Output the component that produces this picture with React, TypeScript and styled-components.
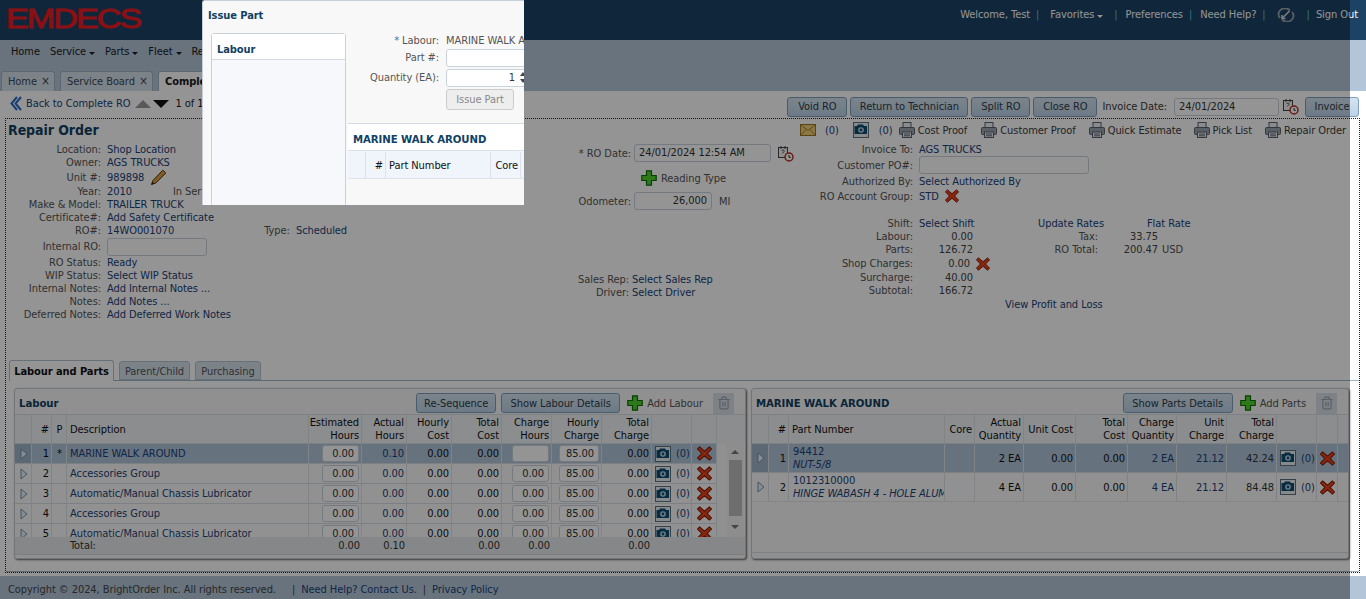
import React from 'react';
import styled, { createGlobalStyle } from 'styled-components';
import { Trash2 } from 'lucide-react';

const GlobalStyle = createGlobalStyle`
  html, body {
    margin: 0;
    height: 599px;
    overflow: hidden;
    background: #fff;
    font-family: "DejaVu Sans Condensed", "Liberation Sans", sans-serif;
    font-size: 11px;
    letter-spacing: -0.07px;
    color: #3b3b3b;
  }
  * { box-sizing: border-box; }
  svg { flex: none; }
`;

const LINK = '#1a4279';

// icons
const RedX = ({ size = 15 }: { size?: number }) => (
  <svg width={size} height={size} viewBox="0 0 16 16">
    <path d="M2.800 1 8 5.400 13.200 1 15.500 3.200 10.900 8 15.500 12.800 13.200 15 8 10.600 2.800 15 .5 12.800 5.100 8 .5 3.200z" fill="#e8431a" stroke="#7e1a08" strokeWidth="1.100" />
  </svg>
);

const GreenPlus = () => (
  <svg width="16" height="16" viewBox="0 0 16 16">
    <path d="M5.500 .8h5v4.700h4.700v5h-4.700v4.700h-5v-4.700H.8v-5h4.700z" fill="#52d32a" stroke="#0f6b10" strokeWidth="1.200" />
  </svg>
);

const Camera = () => (
  <svg width="16" height="16" viewBox="0 0 16 16">
    <rect x=".5" y=".5" width="15" height="15" fill="#e8eef3" stroke="#5d7080" />
    <path d="M1.500 4h2.500l1-1.500h5l1 1.500h3v8h-12.500z" fill="#0f4f73" />
    <circle cx="8" cy="8" r="2.800" fill="#c8dce8" />
    <circle cx="8" cy="8" r="1.400" fill="#0f4f73" />
  </svg>
);

const Printer = () => (
  <svg width="16" height="16" viewBox="0 0 16 16">
    <rect x="4" y=".5" width="8" height="6" fill="#eef1f4" stroke="#56636e" />
    <rect x=".5" y="5.500" width="15" height="7" rx="1" fill="#9aa7b2" stroke="#56636e" />
    <rect x="3.500" y="10" width="9" height="5.500" fill="#eef1f4" stroke="#56636e" />
    <path d="M5 12h6M5 13.800h6" stroke="#56636e" />
  </svg>
);

const Mail = () => (
  <svg width="16" height="14" viewBox="0 0 16 14">
    <rect x=".5" y="1.500" width="15" height="11" fill="#f1cf78" stroke="#9a7626" />
    <path d="M1 2l7 5.500L15 2M1 12l5-5.500M15 12l-5-5.500" fill="none" stroke="#a8822e" />
  </svg>
);

const CalendarClock = () => (
  <svg width="17" height="17" viewBox="0 0 17 17">
    <rect x="1.500" y="2.500" width="9" height="10" fill="#f4f4f4" stroke="#444" />
    <path d="M4 1v3M8 1v3" stroke="#444" />
    <path d="M4.500 6c1-1.500 3-1 2.600.4-.2.7-1.300 1-1.500 2" fill="none" stroke="#444" />
    <circle cx="12" cy="12" r="4" fill="#fff" stroke="#b5301c" strokeWidth="1.500" />
    <path d="M12 10v2.300h1.800" fill="none" stroke="#333" />
  </svg>
);

const Pencil = () => (
  <svg width="17" height="17" viewBox="0 0 17 17">
    <path d="M1.500 15.500 3 11.500 12.800 1.200 15.800 4 5.800 14z" fill="#e0a040" stroke="#4a300c" />
    <path d="M1.500 15.500 2.300 13 4.200 14.700z" fill="#222" />
  </svg>
);

const RowArrow = () => (
  <svg width="8" height="12" viewBox="0 0 8 12">
    <path d="M1 1l6 5-6 5z" fill="#eef3f8" stroke="#6f93b5" />
  </svg>
);

const BackArrow = () => (
  <svg width="12" height="15" viewBox="0 0 12 15">
    <path d="M7 1 1.500 7.500 7 14M11 1 5.500 7.500 11 14" fill="none" stroke="#2a6cc4" strokeWidth="2" />
  </svg>
);

const Sync = () => (
  <svg width="18" height="14" viewBox="0 0 18 14">
    <path d="M13 2.400A6 5.500 0 0 0 3 10M5 11.600A6 5.500 0 0 0 15 4" fill="none" stroke="#9aa5b0" strokeWidth="1.800" />
    <path d="M5.500 10 12.500 3M5 7v3.500h3.500" fill="none" stroke="#d2d8de" strokeWidth="1.600" />
  </svg>
);

// page chrome
const Page = styled.div`
  position: relative;
  width: 1366px;
  height: 599px;
  overflow: hidden;
  display: flex;
  flex-direction: column;
`;

const Header = styled.header`
  height: 40px;
  flex: none;
  background: #1d4364;
  display: flex;
  justify-content: space-between;
  padding: 0 8px;
`;

const LogoMark = styled.div`
  color: #ee1c24;
  font-family: "Liberation Sans", sans-serif;
  font-size: 27px;
  line-height: 38px;
  font-weight: 400;
  -webkit-text-stroke: 0.9px #ee1c24;
  letter-spacing: -1.5px;
  width: 134px;
  margin-left: -2px;
  white-space: nowrap;
  transform: scaleX(1.26);
  transform-origin: left center;
`;

const HeaderLinks = styled.div`
  display: flex;
  align-items: flex-start;
  padding-top: 8px;
  color: #fff;
  white-space: nowrap;
`;

const HeaderItem = styled.span<{ $left: number }>`
  margin-left: ${p => p.$left}px;
`;

const HeaderSep = styled(HeaderItem)`
  color: #58c0e0;
`;

const NavBar = styled.nav`
  height: 28px;
  flex: none;
  background: #b3c6d9;
  display: flex;
  align-items: center;
  padding: 0 0 6px 11px;
  gap: 10px;
  color: #1a1a1a;
`;

const NavItem = styled.span``;

const Caret = styled.i`
  display: inline-block;
  width: 0;
  height: 0;
  margin-left: 3px;
  vertical-align: 0;
  border: 3.5px solid transparent;
  border-bottom: 0;
  border-top-color: currentColor;
`;

const TabBand = styled.div`
  height: 23px;
  flex: none;
  background: #b3c6d9;
  display: flex;
  align-items: flex-end;
  padding-left: 1px;
  gap: 5px;
`;

const TopTab = styled.div<{ $active?: boolean; $width?: number }>`
  width: ${p => (p.$width ? `${p.$width}px` : 'auto')};
  height: 20px;
  padding: 3px 0 0 6px;
  border: 1px solid #9db2c6;
  border-bottom: 0;
  border-radius: 3px 3px 0 0;
  background: ${p => (p.$active ? '#fff' : '#d5e0ea')};
  font-weight: ${p => (p.$active ? 700 : 400)};
  color: ${p => (p.$active ? '#1a1a1a' : '#3e4a55')};
  white-space: nowrap;
`;

const TabClose = styled.span`
  margin-left: 4px;
  font-size: 12px;
  line-height: 11px;
`;

const Body = styled.main`
  flex: 1;
  min-height: 0;
  background: #fff;
  display: flex;
  flex-direction: column;
`;

const Toolbar = styled.div`
  height: 27px;
  flex: none;
  display: flex;
  align-items: center;
  justify-content: space-between;
  padding: 4px 7px 0 10px;
`;

const BackLink = styled.div`
  display: flex;
  align-items: center;
  gap: 4px;
  padding-bottom: 6px;
  color: ${LINK};
`;

const Triangle = styled.i<{ $up?: boolean; $dark?: boolean }>`
  display: inline-block;
  width: 0;
  height: 0;
  border-left: 8px solid transparent;
  border-right: 8px solid transparent;
  ${p => (p.$up ? 'border-bottom' : 'border-top')}: 8px solid ${p => (p.$dark ? '#111' : '#999')};
  margin-left: ${p => (p.$dark ? -2 : 1)}px;
`;

const Pager = styled.span`
  margin-left: 2px;
  color: #222;
`;

const ToolActions = styled.div`
  display: flex;
  align-items: center;
  gap: 3px;
`;

const Button = styled.button<{ $width: number }>`
  width: ${p => p.$width}px;
  height: 20px;
  padding: 0;
  border: 1px solid #7f9fbe;
  border-radius: 3px;
  background: linear-gradient(#d5e4f1, #bcd2e6);
  font: inherit;
  letter-spacing: inherit;
  color: #2f3c48;
  white-space: nowrap;
`;

const ButtonGroup = styled.div`
  display: flex;
  gap: 5px;
`;

const Field = styled.div<{ $width: number; $height?: number; $right?: boolean }>`
  width: ${p => p.$width}px;
  height: ${p => p.$height ?? 18}px;
  flex: none;
  padding: 0 4px;
  line-height: ${p => (p.$height ?? 18) - 2}px;
  border: 1px solid #c9d3dc;
  border-radius: 3px;
  background: #fff;
  color: #333;
  text-align: ${p => (p.$right ? 'right' : 'left')};
  white-space: nowrap;
`;

const InvoiceLabel = styled.span`
  margin: 0 4px 0 2px;
`;

const InvoiceSubmit = styled(Button)`
  margin-left: 3px;
`;

const FormFrame = styled.div`
  flex: 1;
  min-height: 0;
  margin: 0 6px 3px 5px;
  border: 1px dotted #222;
  display: flex;
  flex-direction: column;
`;

const PrintRow = styled.div`
  height: 18px;
  margin: 2px 0 4px 20px;
  display: flex;
  align-items: center;
  white-space: nowrap;
`;

const PrintItem = styled.span<{ $left: number }>`
  display: inline-flex;
  align-items: center;
  gap: 3px;
  margin-left: ${p => p.$left}px;
`;

const Count = styled.span<{ $left: number }>`
  margin-left: ${p => p.$left}px;
  color: ${LINK};
`;

const Form = styled.div`
  flex: none;
  height: 241px;
  display: flex;
  padding: 0 2px;
`;

const LeftColumn = styled.div`
  width: 565px;
  flex: none;
`;

const Heading = styled.h1`
  margin: 0 0 1px;
  font-size: 14px;
  line-height: 23px;
  font-weight: 700;
  color: #104162;
`;

const Row = styled.div<{ $height?: number; $label?: number; $gap?: number }>`
  display: grid;
  grid-template-columns: ${p => p.$label ?? 93}px auto 1fr;
  column-gap: ${p => p.$gap ?? 6}px;
  align-items: center;
  height: ${p => p.$height ?? 13}px;
  line-height: 13px;
  white-space: nowrap;
`;

const Label = styled.span`
  text-align: right;
  color: #555;
`;

const Value = styled.span`
  color: ${LINK};
  display: inline-flex;
  align-items: center;
  gap: 6px;
`;

const Extra = styled.span<{ $left: number }>`
  margin-left: ${p => p.$left}px;
  color: #555;
`;

const Spacer = styled.div<{ $h: number }>`
  height: ${p => p.$h}px;
`;

const CenterColumn = styled.div`
  width: 207px;
  flex: none;
  padding-top: 25px;
`;

const ReadingRow = styled.div`
  display: flex;
  align-items: center;
  gap: 4px;
  height: 20px;
  margin: 6px 0 4px 68px;
  color: #555;
`;

const Unit = styled.span`
  margin-left: 1px;
  color: #555;
`;

const RightColumn = styled.div`
  flex: 1;
  min-width: 0;
`;

const Totals = styled.div`
  display: flex;
  margin-top: 14px;
`;

const TotalsBlock = styled.div`
  width: 258px;
  flex: none;
`;

const Num = styled.span<{ $width: number }>`
  width: ${p => p.$width}px;
  text-align: right;
  color: #444;
`;

const RatesBlock = styled.div``;

const RateLinks = styled.div`
  display: flex;
  gap: 43px;
  height: 13px;
  line-height: 13px;
  color: ${LINK};
  white-space: nowrap;
`;

const ProfitLink = styled.div`
  margin: 1px 0 0 225px;
  line-height: 13px;
  color: ${LINK};
`;

// lower tabs
const LowerTabs = styled.div`
  height: 21px;
  margin-left: 3px;
  flex: none;
  display: flex;
  align-items: flex-end;
  gap: 5px;
  border-bottom: 1px solid #a3b3c2;
`;

const LowerTab = styled.div<{ $active?: boolean; $width: number }>`
  width: ${p => p.$width}px;
  height: ${p => (p.$active ? 21 : 19)}px;
  margin-bottom: ${p => (p.$active ? -1 : 0)}px;
  padding-top: ${p => (p.$active ? 4 : 3)}px;
  text-align: center;
  border: 1px solid #b6c3cf;
  border-bottom: ${p => (p.$active ? 0 : 1)}px solid #b6c3cf;
  border-radius: 3px 3px 0 0;
  background: ${p => (p.$active ? '#fff' : '#d5e0ea')};
  font-weight: ${p => (p.$active ? 700 : 400)};
  color: ${p => (p.$active ? '#111' : '#555')};
  white-space: nowrap;
`;

const Panels = styled.div`
  flex: 1;
  min-height: 0;
  display: flex;
  gap: 5px;
  padding: 7px 3px 10px 8px;
  border-bottom: 1px solid #a3b3c2;
`;

const Panel = styled.section<{ $width: number }>`
  width: ${p => p.$width}px;
  flex: none;
  height: 171px;
  background: #f8f8f8;
  border: 1px solid #c5ccd3;
  border-radius: 3px;
  box-shadow: 1px 1px 2px #666;
  display: flex;
  flex-direction: column;
  overflow: hidden;
`;

const PanelBar = styled.div`
  height: 25px;
  flex: none;
  display: flex;
  align-items: center;
  padding: 3px 0 0 4px;
`;

const PanelTitle = styled.h2`
  flex: 1;
  margin: 0;
  font-size: 11.3px;
  font-weight: 700;
  color: #104162;
  white-space: nowrap;
`;

const AddLink = styled.span`
  display: inline-flex;
  align-items: center;
  gap: 4px;
  margin: 0 10px 0 7px;
  color: #555;
`;

const TrashBox = styled.span`
  width: 21px;
  height: 21px;
  display: inline-flex;
  align-items: center;
  justify-content: center;
  background: #d9dfe5;
  color: #98a5b0;
  margin-right: 11px;
`;

const GridRow = styled.div<{ $cols: string; $height: number; $selected?: boolean; $head?: boolean }>`
  display: grid;
  grid-template-columns: ${p => p.$cols};
  height: ${p => p.$height}px;
  flex: none;
  background: ${p => (p.$selected ? '#b0c4da' : p.$head ? '#f0f3f7' : '#fafafa')};
  border-top: 1px solid #d8dde2;
`;

const Cell = styled.div<{ $align?: string; $ink?: string }>`
  display: flex;
  align-items: center;
  justify-content: ${p => p.$align ?? 'flex-end'};
  text-align: right;
  padding: 0 2px 0 3px;
  border-right: 1px solid #dfe3e7;
  line-height: 13px;
  color: ${p => p.$ink ?? '#111'};
  white-space: nowrap;
  overflow: hidden;
  min-width: 0;
`;

const ArrowCell = styled(Cell)<{ $selected?: boolean }>`
  justify-content: center;
  background: ${p => (p.$selected ? '#9fb3c8' : 'transparent')};
`;

const PhotoCell = styled(Cell)`
  justify-content: flex-start;
  gap: 5px;
  color: ${LINK};
`;

const PartCell = styled.div`
  display: flex;
  flex-direction: column;
  justify-content: center;
  padding: 0 2px 0 4px;
  border-right: 1px solid #dfe3e7;
  line-height: 13px;
  color: ${LINK};
  overflow: hidden;
  white-space: nowrap;
`;

const PartName = styled.em`
  font-style: italic;
`;

const CellField = styled(Field)`
  height: 17px;
  line-height: 15px;
  text-align: right;
`;

const LabourBody = styled.div`
  height: 94px;
  flex: none;
  display: flex;
  overflow: hidden;
`;

const LabourRows = styled.div`
  width: 702px;
  flex: none;
`;

const Scroll = styled.div`
  width: 18px;
  margin-left: 9px;
  display: flex;
  flex-direction: column;
  align-items: center;
  padding: 7px 2px 8px;
  background: #f3f3f3;
`;

const ScrollThumb = styled.div`
  flex: 1;
  width: 13px;
  margin: 6px 0 9px;
  background: #bdbdbd;
`;

const ScrollArrow = styled.i<{ $up?: boolean }>`
  display: block;
  width: 0;
  height: 0;
  border-left: 4px solid transparent;
  border-right: 4px solid transparent;
  ${p => (p.$up ? 'border-bottom' : 'border-top')}: 4px solid #777;
`;

const TotalRow = styled(GridRow)`
  background: #e6e9ec;
  border-top: 0;
`;

const TotalCell = styled(Cell)`
  border-right: 0;
  color: #333;
`;

const PanelFoot = styled.div`
  flex: 1;
  border-top: 1px solid #d8dde2;
`;

const PartsEmpty = styled.div`
  flex: 1;
  border-top: 1px solid #e2e5e8;
  border-bottom: 1px solid #d8dde2;
  margin-bottom: 5px;
`;

const Footer = styled.footer`
  height: 23px;
  flex: none;
  background: #b3c6d9;
  display: flex;
  align-items: center;
  padding: 3px 0 0 8px;
  color: #444;
  white-space: nowrap;
`;

const FootLink = styled.span`
  color: ${LINK};
`;

const FootSep = styled.span<{ $left: number }>`
  margin: 0 6px 0 ${p => p.$left}px;
`;

// modal
const Overlay = styled.div`
  position: absolute;
  top: 0;
  left: 0;
  width: 1350px;
  height: 599px;
  background: rgba(0, 0, 0, 0.42);
`;

const Dialog = styled.div`
  position: absolute;
  top: 0;
  left: 202px;
  width: 322px;
  height: 205px;
  overflow: hidden;
  background: #f8f8f8;
  border-left: 1px solid #c3d0dc;
  border-top: 1px solid #c3d0dc;
  border-radius: 3px 0 0 0;
`;

const DialogTitle = styled.div`
  height: 32px;
  padding: 8px 0 0 5px;
  font-weight: 700;
  color: #104162;
  line-height: 13px;
`;

const DialogBody = styled.div`
  display: flex;
  padding-left: 8px;
  height: 172px;
`;

const SidePanel = styled.div`
  width: 135px;
  flex: none;
  height: 180px;
  background: #f7f8fc;
  border: 1px solid #c9d1d9;
  border-radius: 3px 3px 0 0;
`;

const SideHead = styled.div`
  height: 26px;
  padding: 9px 0 0 5px;
  background: #fff;
  border-bottom: 1px solid #d4dbe2;
  font-weight: 700;
  color: #104162;
  line-height: 13px;
`;

const DialogMain = styled.div`
  flex: 1;
  min-width: 0;
  padding-left: 2px;
`;

const DialogForm = styled.div`
  height: 90px;
`;

const DlgRow = styled.div<{ $height: number }>`
  display: grid;
  grid-template-columns: 91px auto;
  column-gap: 7px;
  align-items: center;
  height: ${p => p.$height}px;
  white-space: nowrap;
  color: #555;
`;

const Star = styled.span`
  color: #2a7ab0;
`;

const QtyField = styled(Field)`
  display: flex;
  padding: 0;
`;

const QtyValue = styled.span`
  width: 68px;
  text-align: right;
`;

const Spin = styled.span`
  margin-left: 5px;
  display: flex;
  flex-direction: column;
  justify-content: center;
  gap: 3px;
`;

const SpinArrow = styled(ScrollArrow)`
  border-left-width: 3px;
  border-right-width: 3px;
  border-top-color: #444;
  border-bottom-color: #444;
`;

const IssueButton = styled.button`
  display: block;
  margin: 1px 0 0 98px;
  height: 21px;
  width: 68px;
  padding: 0;
  border: 1px solid #ccc;
  border-radius: 3px;
  background: #eee;
  font: inherit;
  letter-spacing: inherit;
  color: #888;
`;

const MainPanel = styled.div`
  background: #fff;
  border-top: 1px solid #d4dbe2;
`;

const MainTitle = styled.div`
  height: 26px;
  padding: 9px 0 0 5px;
  font-weight: 700;
  font-size: 11.3px;
  color: #104162;
  line-height: 13px;
`;

const DlgHead = styled.div`
  display: grid;
  grid-template-columns: 18px 20px 105px 30px 1fr;
  height: 29px;
  padding-top: 1px;
  background: #f0f4fb;
  border-top: 1px solid #dde3ea;
  border-bottom: 1px solid #dde3ea;
`;

const labourCols = '17px 20px 15px 242px 53px 45px 45px 50px 50px 50px 50px 40px 25px';
const partsCols = '17px 20px 156px 30px 49px 52px 52px 49px 50px 50px 40px 21px';

const labourRows = [
  { n: 1, p: '*', d: 'MARINE WALK AROUND', a: '0.10', sel: true },
  { n: 2, p: '', d: 'Accessories Group', a: '0.00' },
  { n: 3, p: '', d: 'Automatic/Manual Chassis Lubricator', a: '0.00' },
  { n: 4, p: '', d: 'Accessories Group', a: '0.00' },
  { n: 5, p: '', d: 'Automatic/Manual Chassis Lubricator', a: '0.00' },
];

const partRows = [
  { n: 1, num: '94412', name: 'NUT-5/8', q: '2 EA', uc: '21.12', tc: '42.24', sel: true },
  { n: 2, num: '1012310000', name: 'HINGE WABASH 4 - HOLE ALUM', q: '4 EA', uc: '21.12', tc: '84.48' },
];

const App = () => {
  return (
    <Page>
      <GlobalStyle />
      <Header>
        <LogoMark>EMDECS</LogoMark>
        <HeaderLinks>
          <HeaderItem $left={0}>Welcome, Test</HeaderItem>
          <HeaderSep $left={6}>|</HeaderSep>
          <HeaderItem $left={11}>Favorites<Caret /></HeaderItem>
          <HeaderSep $left={11}>|</HeaderSep>
          <HeaderItem $left={8}>Preferences</HeaderItem>
          <HeaderSep $left={6}>|</HeaderSep>
          <HeaderItem $left={8}>Need Help?</HeaderItem>
          <HeaderSep $left={6}>|</HeaderSep>
          <HeaderItem $left={11}><Sync /></HeaderItem>
          <HeaderSep $left={12}>|</HeaderSep>
          <HeaderItem $left={6}>Sign Out</HeaderItem>
        </HeaderLinks>
      </Header>
      <NavBar>
        <NavItem>Home</NavItem>
        <NavItem>Service<Caret /></NavItem>
        <NavItem>Parts<Caret /></NavItem>
        <NavItem>Fleet<Caret /></NavItem>
        <NavItem>Reports</NavItem>
      </NavBar>
      <TabBand>
        <TopTab $width={54}>Home<TabClose>×</TabClose></TopTab>
        <TopTab $width={93}>Service Board<TabClose>×</TabClose></TopTab>
        <TopTab $active>Complete RO</TopTab>
      </TabBand>
      <Body>
        <Toolbar>
          <BackLink>
            <BackArrow />
            Back to Complete RO
            <Triangle $up />
            <Triangle $dark />
            <Pager>1 of 1</Pager>
          </BackLink>
          <ToolActions>
            <Button $width={60}>Void RO</Button>
            <Button $width={118}>Return to Technician</Button>
            <Button $width={59}>Split RO</Button>
            <Button $width={64}>Close RO</Button>
            <InvoiceLabel>Invoice Date:</InvoiceLabel>
            <Field $width={105}>24/01/2024</Field>
            <CalendarClock />
            <InvoiceSubmit $width={54}>Invoice</InvoiceSubmit>
          </ToolActions>
        </Toolbar>
        <FormFrame>
          <Form>
            <LeftColumn>
              <Heading>Repair Order</Heading>
              <Row><Label>Location:</Label><Value>Shop Location</Value></Row>
              <Row><Label>Owner:</Label><Value>AGS TRUCKS</Value></Row>
              <Row $height={16}><Label>Unit #:</Label><Value>989898 <Pencil /></Value></Row>
              <Row><Label>Year:</Label><Value>2010<Extra $left={35}>In Service:</Extra></Value></Row>
              <Row><Label>Make &amp; Model:</Label><Value>TRAILER TRUCK</Value></Row>
              <Row><Label>Certificate#:</Label><Value>Add Safety Certificate</Value></Row>
              <Row><Label>RO#:</Label><Value>14WO001070<Extra $left={84}>Type:&nbsp; <Count $left={0}>Scheduled</Count></Extra></Value></Row>
              <Row $height={19}><Label>Internal RO:</Label><Field $width={100} /></Row>
              <Row><Label>RO Status:</Label><Value>Ready</Value></Row>
              <Row><Label>WIP Status:</Label><Value>Select WIP Status</Value></Row>
              <Row><Label>Internal Notes:</Label><Value>Add Internal Notes ...</Value></Row>
              <Row><Label>Notes:</Label><Value>Add Notes ...</Value></Row>
              <Row><Label>Deferred Notes:</Label><Value>Add Deferred Work Notes</Value></Row>
            </LeftColumn>
            <CenterColumn>
              <Row $height={18} $label={58} $gap={3}>
                <Label>* RO Date:</Label>
                <Value><Field $width={137}>24/01/2024 12:54 AM</Field><CalendarClock /></Value>
              </Row>
              <ReadingRow><GreenPlus />Reading Type</ReadingRow>
              <Row $height={18} $label={58} $gap={3}>
                <Label>Odometer:</Label>
                <Value><Field $width={78} $right>26,000</Field><Unit>MI</Unit></Value>
              </Row>
              <Spacer $h={63} />
              <Row $label={56} $gap={3}><Label>Sales Rep:</Label><Value>Select Sales Rep</Value></Row>
              <Row $label={56} $gap={3}><Label>Driver:</Label><Value>Select Driver</Value></Row>
            </CenterColumn>
            <RightColumn>
              <PrintRow>
                <Mail /><Count $left={9}>(0)</Count>
                <PrintItem $left={14}><Camera /></PrintItem>
                <Count $left={10}>(0)</Count>
                <PrintItem $left={6}><Printer />Cost Proof</PrintItem>
                <PrintItem $left={14}><Printer />Customer Proof</PrintItem>
                <PrintItem $left={13}><Printer />Quick Estimate</PrintItem>
                <PrintItem $left={12}><Printer />Pick List</PrintItem>
                <PrintItem $left={13}><Printer />Repair Order</PrintItem>
              </PrintRow>
              <Row $label={133}><Label>Invoice To:</Label><Value>AGS TRUCKS</Value></Row>
              <Row $height={18} $label={133}><Label>Customer PO#:</Label><Field $width={170} /></Row>
              <Row $height={15} $label={133}><Label>Authorized By:</Label><Value>Select Authorized By</Value></Row>
              <Row $height={14} $label={133}><Label>RO Account Group:</Label><Value>STD <RedX size={14} /></Value></Row>
              <Totals>
                <TotalsBlock>
                  <Row $label={133}><Label>Shift:</Label><Value>Select Shift</Value></Row>
                  <Row $label={133}><Label>Labour:</Label><Num $width={54}>0.00</Num></Row>
                  <Row $label={133}><Label>Parts:</Label><Num $width={54}>126.72</Num></Row>
                  <Row $height={15} $label={133}><Label>Shop Charges:</Label><Value><Num $width={51}>0.00</Num><RedX size={14} /></Value></Row>
                  <Row $label={133}><Label>Surcharge:</Label><Num $width={54}>40.00</Num></Row>
                  <Row $label={133}><Label>Subtotal:</Label><Num $width={54}>166.72</Num></Row>
                </TotalsBlock>
                <RatesBlock>
                  <RateLinks><span>Update Rates</span><span>Flat Rate</span></RateLinks>
                  <Row $label={60} $gap={4}><Label>Tax:</Label><Num $width={56}>33.75</Num></Row>
                  <Row $label={60} $gap={4}><Label>RO Total:</Label><Value><Num $width={56}>200.47</Num><Extra $left={-2}>USD</Extra></Value></Row>
                </RatesBlock>
              </Totals>
              <ProfitLink>View Profit and Loss</ProfitLink>
            </RightColumn>
          </Form>
          <LowerTabs>
            <LowerTab $active $width={105}>Labour and Parts</LowerTab>
            <LowerTab $width={71}>Parent/Child</LowerTab>
            <LowerTab $width={66}>Purchasing</LowerTab>
          </LowerTabs>
          <Panels>
            <Panel $width={732}>
              <PanelBar>
                <PanelTitle>Labour</PanelTitle>
                <ButtonGroup>
                  <Button $width={80}>Re-Sequence</Button>
                  <Button $width={119}>Show Labour Details</Button>
                </ButtonGroup>
                <AddLink><GreenPlus />Add Labour</AddLink>
                <TrashBox><Trash2 size={14} /></TrashBox>
              </PanelBar>
              <GridRow $cols={labourCols} $height={29} $head>
                <Cell />
                <Cell>#</Cell>
                <Cell $align="center">P</Cell>
                <Cell $align="flex-start">Description</Cell>
                <Cell>Estimated<br />Hours</Cell>
                <Cell>Actual<br />Hours</Cell>
                <Cell>Hourly<br />Cost</Cell>
                <Cell>Total<br />Cost</Cell>
                <Cell>Charge<br />Hours</Cell>
                <Cell>Hourly<br />Charge</Cell>
                <Cell>Total<br />Charge</Cell>
                <Cell />
                <Cell />
              </GridRow>
              <LabourBody>
                <LabourRows>
                  {labourRows.map(r => (
                    <GridRow key={r.n} $cols={labourCols} $height={20} $selected={r.sel}>
                      <ArrowCell $selected={r.sel}><RowArrow /></ArrowCell>
                      <Cell>{r.n}</Cell>
                      <Cell $align="center">{r.p}</Cell>
                      <Cell $align="flex-start" $ink={LINK}>{r.d}</Cell>
                      <Cell><CellField $width={37}>0.00</CellField></Cell>
                      <Cell $ink={LINK}>{r.a}</Cell>
                      <Cell>0.00</Cell>
                      <Cell>0.00</Cell>
                      <Cell><CellField $width={37}>{r.sel ? '' : '0.00'}</CellField></Cell>
                      <Cell><CellField $width={40}>85.00</CellField></Cell>
                      <Cell>0.00</Cell>
                      <PhotoCell><Camera />(0)</PhotoCell>
                      <Cell $align="center"><RedX /></Cell>
                    </GridRow>
                  ))}
                </LabourRows>
                <Scroll>
                  <ScrollArrow $up />
                  <ScrollThumb />
                  <ScrollArrow />
                </Scroll>
              </LabourBody>
              <TotalRow $cols={labourCols} $height={17}>
                <TotalCell />
                <TotalCell />
                <TotalCell />
                <TotalCell $align="flex-start">Total:</TotalCell>
                <TotalCell>0.00</TotalCell>
                <TotalCell>0.10</TotalCell>
                <TotalCell />
                <TotalCell>0.00</TotalCell>
                <TotalCell>0.00</TotalCell>
                <TotalCell />
                <TotalCell>0.00</TotalCell>
              </TotalRow>
              <PanelFoot />
            </Panel>
            <Panel $width={598}>
              <PanelBar>
                <PanelTitle>MARINE WALK AROUND</PanelTitle>
                <Button $width={110}>Show Parts Details</Button>
                <AddLink><GreenPlus />Add Parts</AddLink>
                <TrashBox><Trash2 size={14} /></TrashBox>
              </PanelBar>
              <GridRow $cols={partsCols} $height={29} $head>
                <Cell />
                <Cell>#</Cell>
                <Cell $align="flex-start">Part Number</Cell>
                <Cell>Core</Cell>
                <Cell>Actual<br />Quantity</Cell>
                <Cell>Unit Cost</Cell>
                <Cell>Total<br />Cost</Cell>
                <Cell>Charge<br />Quantity</Cell>
                <Cell>Unit<br />Charge</Cell>
                <Cell>Total<br />Charge</Cell>
                <Cell />
                <Cell />
              </GridRow>
              {partRows.map(r => (
                <GridRow key={r.n} $cols={partsCols} $height={29} $selected={r.sel}>
                  <ArrowCell $selected={r.sel}><RowArrow /></ArrowCell>
                  <Cell>{r.n}</Cell>
                  <PartCell>{r.num}<PartName>{r.name}</PartName></PartCell>
                  <Cell />
                  <Cell>{r.q}</Cell>
                  <Cell>0.00</Cell>
                  <Cell>0.00</Cell>
                  <Cell $ink={LINK}>{r.q}</Cell>
                  <Cell $ink={LINK}>{r.uc}</Cell>
                  <Cell $ink="#333">{r.tc}</Cell>
                  <PhotoCell><Camera />(0)</PhotoCell>
                  <Cell $align="center"><RedX /></Cell>
                </GridRow>
              ))}
              <PartsEmpty />
            </Panel>
          </Panels>
        </FormFrame>
      </Body>
      <Footer>
        Copyright © 2024, BrightOrder Inc. All rights reserved.
        <FootSep $left={16}>|</FootSep>
        <FootLink>Need Help? Contact Us.</FootLink>
        <FootSep $left={6}>|</FootSep>
        <FootLink>Privacy Policy</FootLink>
      </Footer>
      <Overlay />
      <Dialog>
        <DialogTitle>Issue Part</DialogTitle>
        <DialogBody>
          <SidePanel><SideHead>Labour</SideHead></SidePanel>
          <DialogMain>
            <DialogForm>
              <DlgRow $height={15}><Label><Star>*</Star> Labour:</Label><span>MARINE WALK AROUND</span></DlgRow>
              <DlgRow $height={19}><Label>Part #:</Label><Field $width={120} /></DlgRow>
              <DlgRow $height={21}>
                <Label>Quantity (EA):</Label>
                <QtyField $width={84}>
                  <QtyValue>1</QtyValue>
                  <Spin><SpinArrow $up /><SpinArrow /></Spin>
                </QtyField>
              </DlgRow>
              <IssueButton>Issue Part</IssueButton>
            </DialogForm>
            <MainPanel>
              <MainTitle>MARINE WALK AROUND</MainTitle>
              <DlgHead>
                <Cell />
                <Cell>#</Cell>
                <Cell $align="flex-start">Part Number</Cell>
                <Cell>Core</Cell>
                <Cell />
              </DlgHead>
            </MainPanel>
          </DialogMain>
        </DialogBody>
      </Dialog>
    </Page>
  );
};

export default App;
